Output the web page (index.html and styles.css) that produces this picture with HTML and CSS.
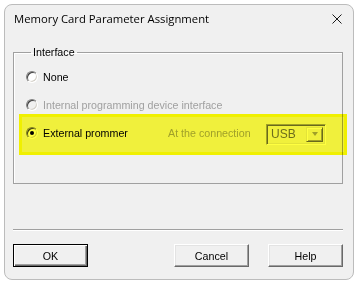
FILE: index.html
```html
<!DOCTYPE html>
<html>
<head>
  <meta http-equiv="Content-type" content="text/html; charset=utf-8">
  <title>Memory Card Parameter Assignment</title>
<link rel="stylesheet" href="styles.css">
</head>

<body>
  <div class="window">
    <div class="titlebar">
      <span class="title">Memory Card Parameter Assignment</span>
      <svg class="close" width="10" height="10" viewBox="0 0 10 10">
        <path d="M0.5 0.5 L9.5 9.5 M9.5 0.5 L0.5 9.5" stroke="#1a1a1a" stroke-width="1" fill="none"/>
      </svg>
    </div>

    <div class="dialog">
      <fieldset class="group">
        <legend>Interface</legend>

        <div class="row">
          <span class="radio"></span>
          <span class="label">None</span>
        </div>

        <div class="row disabled">
          <span class="radio"></span>
          <span class="label">Internal programming device interface</span>
        </div>

        <div class="row">
          <span class="radio checked"></span>
          <span class="label wide">External prommer</span>
          <span class="label caption disabled">At the connection</span>
          <div class="combo">
            <span class="combo-text">USB</span>
            <span class="combo-btn"><span class="arrow"></span></span>
          </div>
        </div>
      </fieldset>

      <div class="separator"></div>

      <div class="buttons">
        <div class="button default">OK</div>
        <div class="right-buttons">
          <div class="button">Cancel</div>
          <div class="button">Help</div>
        </div>
      </div>
    </div>

    <div class="highlight"></div>
  </div>
</body>
</html>
```

FILE: styles.css
```css
body {
  margin: 0;
  background: #fff;
  font-family: "Liberation Sans", Arial, sans-serif;
  font-size: 10.7px;
  color: #000;
}

.window {
  position: relative;
  box-sizing: border-box;
  width: 350px;
  height: 276px;
  margin: 4px 0 0 4px;
  border: 1px solid #bcbcbc;
  border-radius: 8px;
  background: #f0f0f0;
  display: flex;
  flex-direction: column;
}

.titlebar {
  height: 27px;
  display: flex;
  align-items: center;
  justify-content: space-between;
  padding: 0 11px 0 9px;
}

.title {
  font-family: "Open Sans", "Noto Sans", sans-serif;
  font-size: 11.3px;
  color: #000;
}

.dialog {
  flex: 1;
  display: flex;
  flex-direction: column;
  padding: 13px 10px 0 8px;
}

/* group box */
.group {
  box-sizing: border-box;
  height: 139px;
  margin: 0;
  padding: 4px 0 0 12px;
  border: 1px solid #a0a0a0;
  box-shadow: inset 1px 1px 0 #fff;
}

.group legend {
  margin-left: 5px;
  padding: 0 2px;
  line-height: 14px;
}

.row {
  height: 28px;
  display: flex;
  align-items: center;
}

.radio {
  box-sizing: border-box;
  width: 12px;
  height: 12px;
  border-radius: 50%;
  border: 1px solid;
  border-color: #808080 #fff #fff #808080;
  background: #fff;
  box-shadow: inset 1px 1px 0 #404040, inset -1px -1px 0 #d4d0c8;
  margin-right: 5px;
  position: relative;
}

.disabled .radio {
  background: #f0f0f0;
}

.radio.checked::after {
  content: "";
  position: absolute;
  left: 3px;
  top: 3px;
  width: 4px;
  height: 4px;
  border-radius: 50%;
  background: #000;
}

.label {
  line-height: 13px;
  white-space: nowrap;
}

.disabled .label,
.label.disabled {
  color: #a0a0a0;
}

.label.wide {
  width: 125px;
}

.label.caption {
  width: 98px;
}

/* disabled combo box */
.combo {
  box-sizing: border-box;
  width: 60px;
  height: 21px;
  margin-top: 2px;
  border: 1px solid;
  border-color: #a0a0a0 #fff #fff #a0a0a0;
  box-shadow: inset 1px 1px 0 #696969, inset -1px -1px 0 #e3e3e3;
  background: #f0f0f0;
  display: flex;
  align-items: center;
  padding: 2px;
}

.combo-text {
  flex: 1;
  color: #6d6d6d;
  padding-left: 2px;
  font-size: 12px;
}

.combo-btn {
  box-sizing: border-box;
  width: 17px;
  height: 15px;
  border: 1px solid;
  border-color: #e3e3e3 #696969 #696969 #e3e3e3;
  box-shadow: inset 1px 1px 0 #fff, inset -1px -1px 0 #a0a0a0;
  display: flex;
  align-items: center;
  justify-content: center;
}

.arrow {
  width: 0;
  height: 0;
  border-left: 3.5px solid transparent;
  border-right: 3.5px solid transparent;
  border-top: 4px solid #a0a0a0;
}

.separator {
  margin-top: 45px;
  height: 1px;
  background: #a0a0a0;
  border-bottom: 1px solid #fff;
}

.buttons {
  margin-top: 13px;
  display: flex;
  justify-content: space-between;
}

.right-buttons {
  display: flex;
  gap: 19px;
}

.button {
  box-sizing: border-box;
  width: 75px;
  height: 23px;
  display: flex;
  align-items: center;
  justify-content: center;
  border: 1px solid;
  border-color: #fff #696969 #696969 #fff;
  box-shadow: inset -1px -1px 0 #a0a0a0, inset 1px 1px 0 #e3e3e3;
}

.button.default {
  border-color: #000;
  box-shadow: inset 1px 1px 0 #fff, inset -1px -1px 0 #696969, inset -2px -2px 0 #a0a0a0;
}

/* yellow marker drawn over the third option */
.highlight {
  position: absolute;
  left: 14px;
  top: 109px;
  width: 328px;
  height: 41px;
  box-sizing: border-box;
  border: 3px solid #ffff00;
  background: #ffff40;
  mix-blend-mode: multiply;
}
```
